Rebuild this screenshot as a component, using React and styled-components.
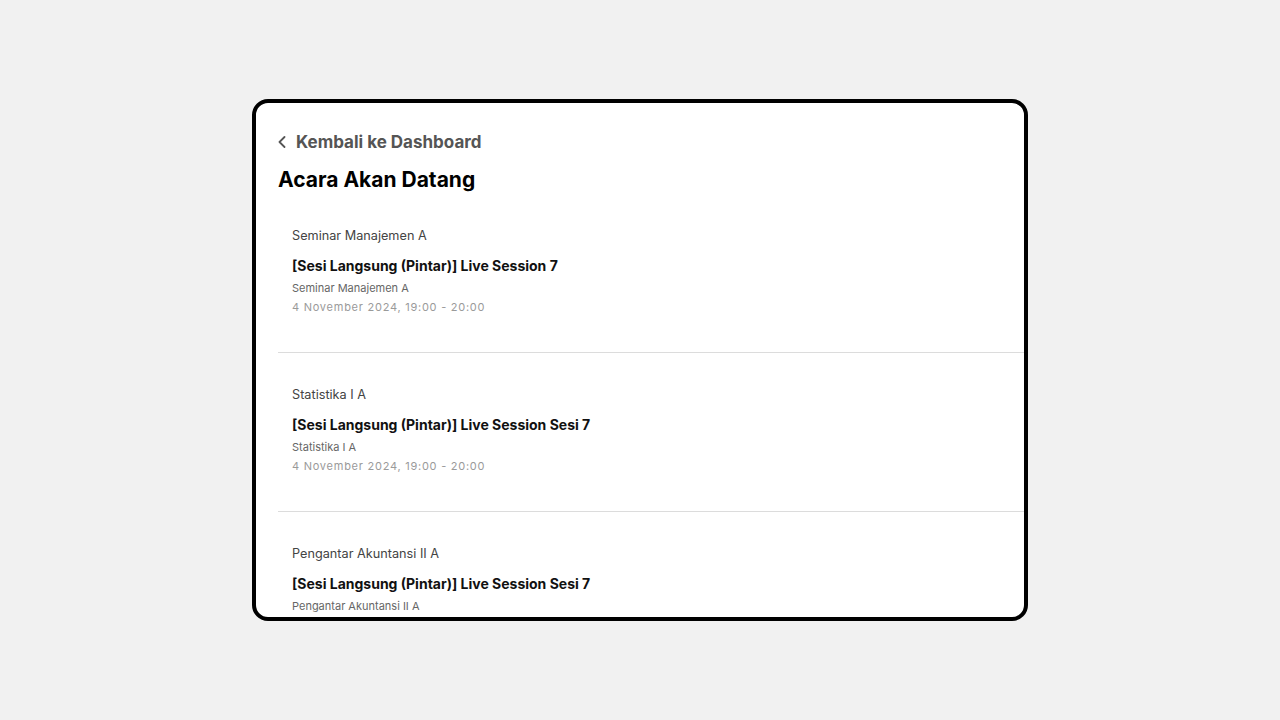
import styled, { createGlobalStyle } from 'styled-components';

const GlobalStyle = createGlobalStyle`
  html, body {
    margin: 0;
    padding: 0;
    background: #f1f1f1;
    font-family: Inter, "Noto Sans", "Liberation Sans", sans-serif;
  }
`;

const Page = styled.div`
  height: 720px;
  display: flex;
  align-items: center;
  justify-content: center;
`;

const Card = styled.div`
  width: 776px;
  height: 522px;
  box-sizing: border-box;
  border: 4px solid #000;
  border-radius: 16px;
  background: #fff;
  overflow: hidden;
  padding: 29px 0 0 22px;
`;

const BackLink = styled.a`
  display: flex;
  align-items: center;
  gap: 10px;
  height: 20px;
  font-size: 17px;
  font-weight: 700;
  color: #555;
  text-decoration: none;
  cursor: pointer;
`;

const Title = styled.h1`
  margin: 15px 0 0;
  font-size: 21px;
  line-height: 26px;
  font-weight: 700;
  color: #000;
`;

const List = styled.div`
  display: flex;
  flex-direction: column;
  margin-top: 1px;
`;

const Item = styled.div`
  display: flex;
  flex-direction: column;
  padding: 33px 14px 37px;
  border-bottom: 1px solid #dcdcdc;
`;

const Course = styled.div`
  font-size: 12.7px;
  line-height: 18px;
  color: #444;
`;

const EventName = styled.div`
  margin-top: 11px;
  font-size: 14px;
  line-height: 20px;
  font-weight: 700;
  color: #111;
`;

const Meta = styled.div`
  margin-top: ${(p) => p.gap}px;
  font-size: 11px;
  line-height: 16px;
  color: ${(p) => p.color};
  letter-spacing: ${(p) => p.spacing || 0}px;
`;

const events = [
  { course: 'Seminar Manajemen A', name: '[Sesi Langsung (Pintar)] Live Session 7' },
  { course: 'Statistika I A', name: '[Sesi Langsung (Pintar)] Live Session Sesi 7' },
  { course: 'Pengantar Akuntansi II A', name: '[Sesi Langsung (Pintar)] Live Session Sesi 7' },
];

function ChevronLeft() {
  return (
    <svg width="8" height="12" viewBox="0 0 8 12" fill="none">
      <path d="M6.5 1 L1.5 6 L6.5 11" stroke="#555" strokeWidth="1.8" strokeLinecap="round" strokeLinejoin="round" />
    </svg>
  );
}

export default function App() {
  return (
    <>
      <GlobalStyle />
      <Page>
        <Card>
          <BackLink>
            <ChevronLeft />
            Kembali ke Dashboard
          </BackLink>
          <Title>Acara Akan Datang</Title>
          <List>
            {events.map((ev, i) => (
              <Item key={i}>
                <Course>{ev.course}</Course>
                <EventName>{ev.name}</EventName>
                <Meta gap={4} color="#666">{ev.course}</Meta>
                <Meta gap={3} color="#9a9a9a" spacing={0.75}>4 November 2024, 19:00 - 20:00</Meta>
              </Item>
            ))}
          </List>
        </Card>
      </Page>
    </>
  );
}
